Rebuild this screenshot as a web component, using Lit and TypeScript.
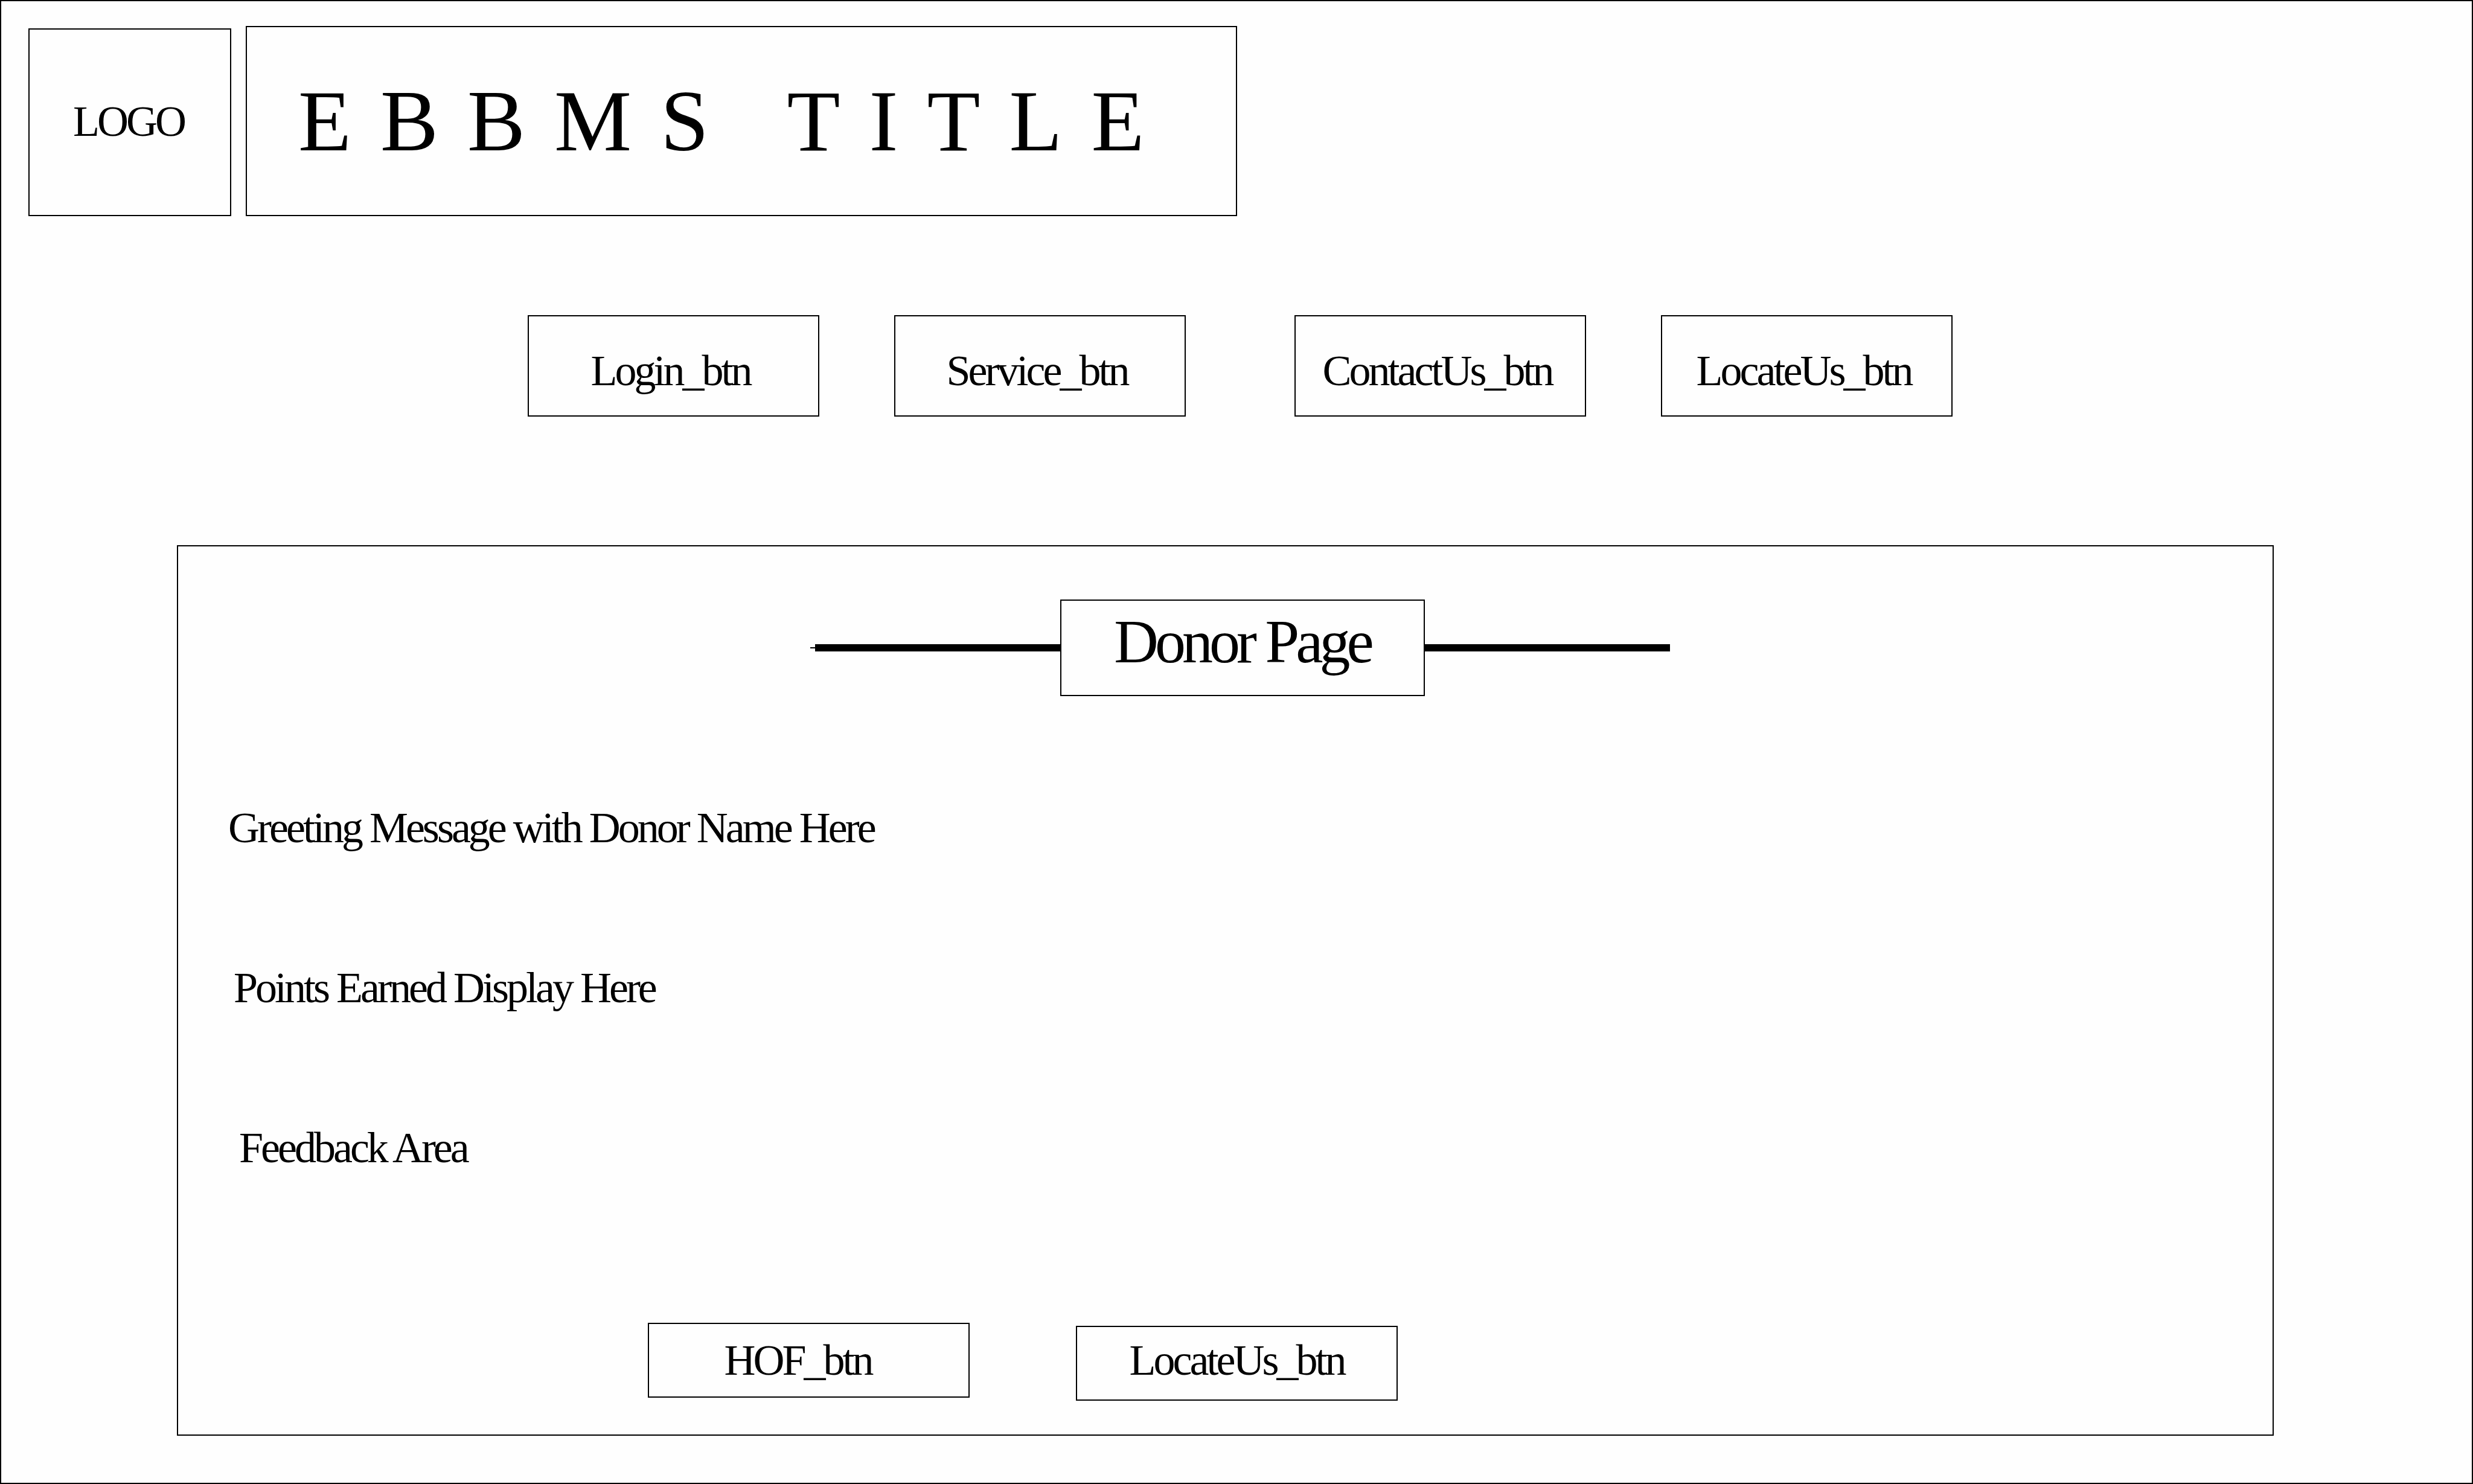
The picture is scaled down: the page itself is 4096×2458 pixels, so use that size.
import { LitElement, html, css } from "lit";
import { customElement } from "lit/decorators.js";

@customElement("app-root")
export class AppRoot extends LitElement {
  static styles = css`
    :host {
      display: block;
      --line: 2px solid #000;
      --tight: -4px;
      --wide: 48px;
      font-family: "Liberation Serif", "Times New Roman", serif;
      font-size: 72px;
      line-height: 80px;
      letter-spacing: var(--tight);
      color: #000;
      background: #fff;
    }

    * {
      box-sizing: border-box;
    }

    .page {
      display: flex;
      flex-direction: column;
      min-height: 100vh;
      padding: 41px 0 78px;
      border: var(--line);
      background: #fefefe;
    }

    .header {
      display: flex;
      align-items: flex-end;
      gap: 24px;
      padding: 0 45px;
    }

    .logo,
    .banner {
      display: flex;
      align-items: center;
      border: var(--line);
    }

    .logo {
      justify-content: center;
      width: 336px;
      height: 311px;
      padding: 0 4px 4px 0;
    }

    .banner {
      width: 1642px;
      height: 315px;
      margin: 0;
      padding-left: 85px;
      font-size: 144px;
      font-weight: 400;
      line-height: 160px;
      letter-spacing: var(--wide);
      white-space: nowrap;
    }

    .nav {
      display: flex;
      flex-wrap: wrap;
      justify-content: center;
      gap: 180px;
      margin-top: 164px;
      padding-left: 12px;
    }

    .group {
      display: flex;
      gap: 124px;
    }

    .button {
      margin: 0;
      border: var(--line);
      border-radius: 0;
      background: none;
      color: inherit;
      font: inherit;
      letter-spacing: inherit;
      text-align: center;
      white-space: nowrap;
      cursor: pointer;
    }

    .nav .button {
      width: 483px;
      height: 168px;
      padding: 16px 10px 0 0;
    }

    .panel {
      display: flex;
      flex: 1;
      flex-direction: column;
      margin: 213px 328px 0 291px;
      padding: 88px 0 56px;
      border: var(--line);
    }

    .heading {
      display: flex;
      align-items: center;
      justify-content: center;
      padding-left: 48px;
    }

    .tip {
      width: 8px;
      height: 2px;
      background: #000;
    }

    .bar {
      width: 406px;
      height: 12px;
      background: #000;
    }

    .title {
      width: 604px;
      height: 160px;
      margin: 0;
      padding-top: 8px;
      border: var(--line);
      font-size: 102px;
      font-weight: 400;
      line-height: 120px;
      letter-spacing: -6px;
      text-align: center;
      white-space: nowrap;
    }

    .messages {
      display: flex;
      flex-direction: column;
      gap: 185px;
      margin-top: 178px;
      padding-left: 83px;
    }

    .message {
      margin: 0;
    }

    .points {
      padding-left: 9px;
    }

    .feedback {
      padding-left: 18px;
    }

    .actions {
      display: flex;
      gap: 176px;
      height: 129px;
      margin-top: auto;
      padding-left: 778px;
    }

    .actions .button {
      width: 533px;
      height: 124px;
    }

    .actions .hof {
      padding: 0 36px 0 0;
    }

    .actions .locate {
      align-self: flex-end;
      padding: 0 0 10px;
    }
  `;

  private groups = [
    ["Login_btn", "Service_btn"],
    ["ContactUs_btn", "LocateUs_btn"],
  ];

  render() {
    return html`
      <div class="page">
        <header class="header">
          <div class="logo">LOGO</div>
          <h1 class="banner">EBBMS TITLE</h1>
        </header>
        <nav class="nav">
          ${this.groups.map(
            (labels) => html`<div class="group">
              ${labels.map(
                (label) =>
                  html`<button class="button" type="button">${label}</button>`
              )}
            </div>`
          )}
        </nav>
        <main class="panel">
          <div class="heading">
            <span class="tip"></span>
            <span class="bar"></span>
            <h2 class="title">Donor Page</h2>
            <span class="bar"></span>
          </div>
          <div class="messages">
            <p class="message">Greeting Message with Donor Name Here</p>
            <p class="message points">Points Earned Display Here</p>
            <p class="message feedback">Feedback Area</p>
          </div>
          <div class="actions">
            <button class="button hof" type="button">HOF_btn</button>
            <button class="button locate" type="button">LocateUs_btn</button>
          </div>
        </main>
      </div>
    `;
  }
}
